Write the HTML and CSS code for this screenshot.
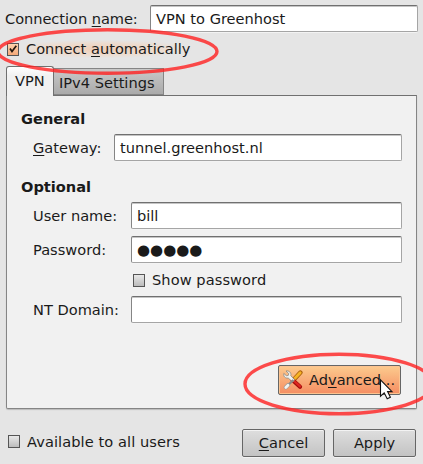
FILE: index.html
```html
<!DOCTYPE html>
<html lang="en">
<head>
<meta charset="utf-8">
<title>Editing VPN to Greenhost</title>
<link rel="stylesheet" href="styles.css">
</head>
<body>
<main class="dialog">
  <div class="row name-row"><span class="label">Connection <u>n</u>ame:</span><div class="field">VPN to Greenhost</div></div>
  <div class="check-row auto-row">
    <span class="checkbox hot"><svg viewBox="0 0 12 12"><path d="M3 5.5L5 8.5L9.3 2.8" fill="none" stroke="#24180f" stroke-width="1.7"/></svg></span>
    <span class="glow">Connect <u>a</u>utomatically</span>
  </div>
  <div class="tabs"><div class="tab active">VPN</div><div class="tab">IPv4 Settings</div></div>
  <section class="panel">
    <h2>General</h2>
    <div class="row gateway"><span class="label"><u>G</u>ateway:</span><div class="field">tunnel.greenhost.nl</div></div>
    <h2 class="optional">Optional</h2>
    <div class="row user"><span class="label">User name:</span><div class="field">bill</div></div>
    <div class="row pass"><span class="label">Password:</span><div class="field dots">●●●●●</div></div>
    <div class="check-row show-row"><span class="checkbox"></span><span>Show password</span></div>
    <div class="row domain"><span class="label">NT Domain:</span><div class="field"></div></div>
    <div class="button advanced">
      <svg class="tools" viewBox="0 0 20 20">
        <path d="M17.4 2.6L10.5 10" stroke="#a85d08" stroke-width="4.4" stroke-linecap="round"/>
        <path d="M17.2 2.7L10.5 9.8" stroke="#f6b425" stroke-width="2.8" stroke-linecap="round"/>
        <path d="M9.5 10L17 16.8" stroke="#a40c0c" stroke-width="4.2" stroke-linecap="round"/>
        <path d="M10 10L17 16.4" stroke="#dd2820" stroke-width="2.2" stroke-linecap="round"/>
        <path d="M3 1L5.8 3.7L5.2 5.5L3.3 5.7L.8 3.4C.2 6.2 2.2 8.6 5.2 8L9.6 12L11.6 9.8L7.8 5.7C8.6 2.8 6 .3 3 1Z" fill="#f3f3ef" stroke="#898984" stroke-width=".8"/>
        <path d="M10.3 10L5 15.2" stroke="#8b8b88" stroke-width="2.2"/>
        <path d="M5 15.2L2.8 17.4" stroke="#999" stroke-width="4" stroke-linecap="round"/>
        <path d="M5 15.2L2.8 17.4" stroke="#f4f4f0" stroke-width="2.8" stroke-linecap="round"/>
      </svg>
      <span>Ad<u>v</u>anced...</span>
    </div>
  </section>
  <footer class="footer">
    <div class="check-row"><span class="checkbox"></span><span class="wide">Available to all users</span></div>
    <div class="button action"><span><u>C</u>ancel</span></div>
    <div class="button action"><span>Apply</span></div>
  </footer>
  <svg class="overlay" viewBox="0 0 423 464">
    <g fill="none" stroke="#ff2020" stroke-opacity=".8" stroke-width="3.4">
      <ellipse cx="107.5" cy="51.5" rx="109.5" ry="21.8"/>
      <ellipse cx="339" cy="384" rx="94" ry="29.8"/>
    </g>
    <path d="M380.5 379.8V396.2L384.2 392.8L387.2 398.8L390.4 397.2L387.6 391.6H392Z" fill="#fff" stroke="#111" stroke-width="1.1"/>
  </svg>
</main>
</body>
</html>
```

FILE: styles.css
```css
* { box-sizing: border-box; }
body { margin: 0; background: #e5e5e5; color: #1a1a1a; font: 14.6px/18px "DejaVu Sans", sans-serif; }
u { text-decoration-thickness: 1px; text-underline-offset: 2px; text-decoration-skip-ink: none; }
.dialog { position: relative; width: 423px; height: 464px; overflow: hidden; padding: 5px 5px 0 6px; white-space: nowrap; }
.row { display: flex; height: 27px; align-items: center; }
.label { flex: none; }
.field { flex: 1; height: 27px; padding: 4px 5px; background: #fff; border: 1px solid #a5a5a5; border-top: 1px solid #707070; border-left-color: #858585; border-radius: 2px; box-shadow: inset 0 1px #c5c5c5, 0 1px #f3f3f3; }
.name-row .label { width: 145px; margin-left: -1px; letter-spacing: -.05px; }
.check-row { display: flex; align-items: center; height: 18px; }
.checkbox { flex: none; width: 12px; height: 13px; border: 1px solid #555; background: linear-gradient(#e8e8e8, #bcbcbc); }
.checkbox.hot { background: linear-gradient(#ffd3ad, #f4a878); }
.checkbox svg { display: block; width: 12px; height: 12px; margin: -1px; }
.auto-row { margin: 8px 0 0 1px; gap: 7px; }
.glow { background: radial-gradient(ellipse at 45% 50%, #f0cfb8, #eddccf 45%, #e5e5e500 72%); }
.tabs { display: flex; align-items: flex-end; height: 29px; margin-top: 8px; }
.tab { height: 27px; width: 110px; padding: 5px 0 0 5px; background: linear-gradient(#c9c9c9, #aaa); border: 1px solid #858585; border-left: 0; }
.tab.active { position: relative; width: 48px; height: 30px; margin-bottom: -1px; padding: 5px 0 0 8px; background: linear-gradient(#fff, #f1f1f1 30%); border: 1px solid #707070; border-bottom: 0; border-radius: 3px 3px 0 0; }
.panel { height: 314px; width: 411px; padding: 14px 14px 0 14px; background: #f1f1f1; border: 1px solid #858585; border-top-color: #707070; border-radius: 0 0 2px 2px; box-shadow: 0 1px 1px #bbb; }
h2 { margin: 0; font-size: 14.6px; line-height: 18px; height: 18px; }
.panel .row { padding-left: 12px; }
.gateway { margin-top: 6px; }
.gateway .label { width: 81px; }
.optional { margin-top: 17px; }
.user { margin-top: 6px; }
.user .label, .pass .label, .domain .label { width: 98px; }
.pass { margin-top: 7px; }
.show-row { margin: 8px 0 0 112px; gap: 7px; letter-spacing: .07px; }
.domain { margin-top: 7px; }
.dots { font-size: 15px; }
.button { display: flex; align-items: center; justify-content: center; border: 1px solid #666; border-radius: 2px; background: linear-gradient(#dedede, #c3c3c3); box-shadow: inset 0 1px #f3f3f3, 0 1px #f2f2f2; }
.advanced { width: 123px; height: 30px; margin: 42px 1px 0 auto; padding-left: 4px; justify-content: flex-start; gap: 6px; background: linear-gradient(#fccb8e, #f58d62); box-shadow: inset 0 0 0 1px #fcc390; }
.tools { width: 20px; height: 20px; fill: none; }
.footer { display: flex; gap: 8px; margin-top: 20px; }
.footer .check-row { width: 226px; height: 25px; margin-left: 2px; gap: 7px; }
.wide { letter-spacing: .08px; }
.action { width: 83px; height: 28px; }
.overlay { position: absolute; inset: 0; width: 423px; height: 464px; pointer-events: none; }
```
